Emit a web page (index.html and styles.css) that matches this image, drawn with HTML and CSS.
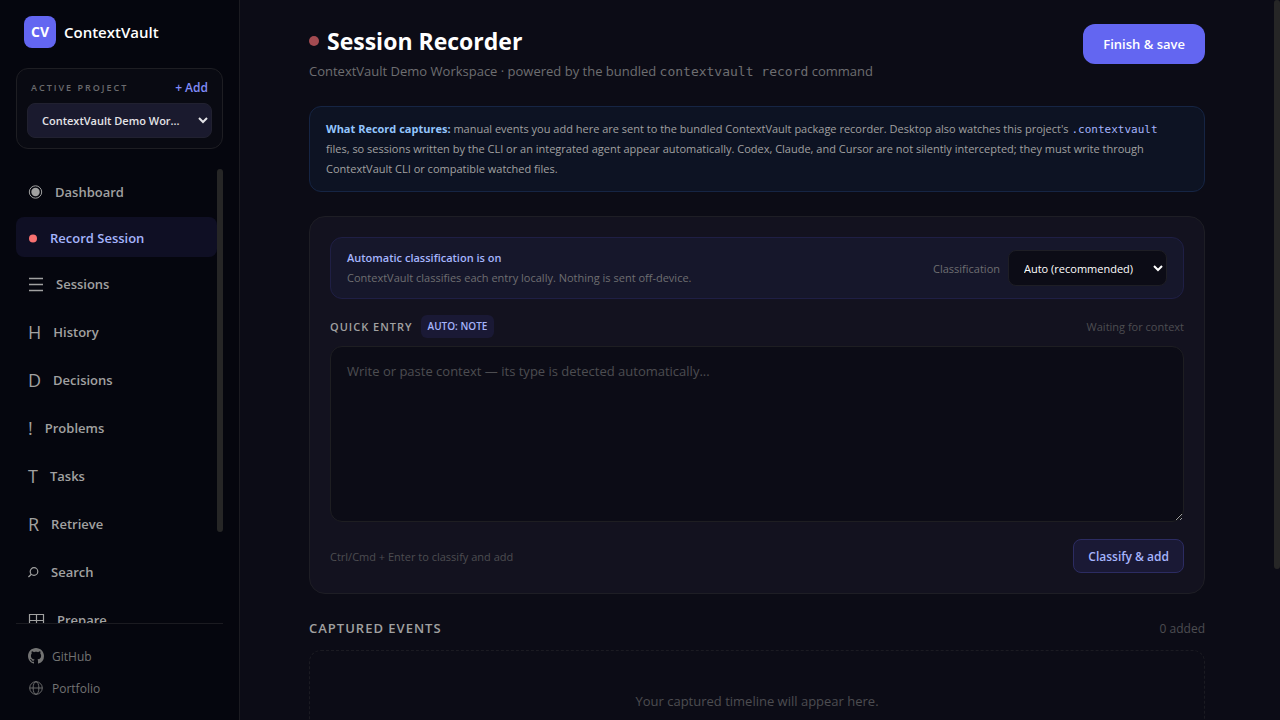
FILE: index.html
```
<!DOCTYPE html>
<html lang="en">
  <head>
    <meta charset="utf-8" />
    <meta name="viewport" content="width=device-width, initial-scale=1" />
    <title>ContextVault</title>
    <link rel="stylesheet" href="styles.css">
  </head>
  <body>
    <aside class="sidebar">
      <div class="brand">
        <span class="brand-mark">CV</span>
        <span class="brand-name">ContextVault</span>
      </div>

      <div class="project">
        <div class="project-head">
          <label class="project-label" for="project">Active project</label>
          <button class="link-button" type="button">+ Add</button>
        </div>
        <select class="project-select" id="project">
          <option>ContextVault Demo Wor...</option>
        </select>
      </div>

      <div class="nav-wrap">
        <nav class="nav">
          <a class="nav-item" href="#dashboard">
            <svg width="15" height="16" viewBox="0 0 15 16"><circle cx="7.5" cy="8" r="6.2" fill="none" stroke="currentColor"/><circle cx="7.5" cy="8" r="4.2" fill="currentColor"/></svg>
            Dashboard
          </a>
          <a class="nav-item active" href="#record">
            <svg width="10" height="10" viewBox="0 0 10 10"><circle cx="5" cy="5.5" r="4" fill="#f87171"/></svg>
            Record Session
          </a>
          <a class="nav-item" href="#sessions">
            <svg width="16" height="16" viewBox="0 0 16 16"><path d="M1 2.5h14M1 8.5h14M1 14.5h14" stroke="currentColor" stroke-width="1.3"/></svg>
            Sessions
          </a>
          <a class="nav-item" href="#history"><span class="nav-letter">H</span>History</a>
          <a class="nav-item" href="#decisions"><span class="nav-letter">D</span>Decisions</a>
          <a class="nav-item" href="#problems"><span class="nav-letter">!</span>Problems</a>
          <a class="nav-item" href="#tasks"><span class="nav-letter">T</span>Tasks</a>
          <a class="nav-item" href="#retrieve"><span class="nav-letter">R</span>Retrieve</a>
          <a class="nav-item" href="#search">
            <svg width="11" height="12" viewBox="0 0 11 12"><circle cx="6" cy="5.5" r="3.8" fill="none" stroke="currentColor" stroke-width="1.2"/><path d="M3.4 8.2L.4 11" stroke="currentColor" stroke-width="1.3"/></svg>
            Search
          </a>
          <a class="nav-item" href="#prepare">
            <svg width="17" height="16" viewBox="0 0 17 16"><path d="M1.5 2.5h14v12h-14zM1.5 8.5h14M8.5 2.5v12" fill="none" stroke="currentColor" stroke-width="1.2"/></svg>
            Prepare
          </a>
        </nav>
        <span class="scroll-thumb nav-thumb"></span>
      </div>

      <div class="sidebar-footer">
        <a class="footer-link" href="#github">
          <svg width="16" height="16" viewBox="0 0 16 16" fill="currentColor"><path d="M8 0C3.58 0 0 3.58 0 8c0 3.54 2.29 6.53 5.47 7.59.4.07.55-.17.55-.38 0-.19-.01-.82-.01-1.49-2.01.37-2.53-.49-2.69-.94-.09-.23-.48-.94-.82-1.13-.28-.15-.68-.52-.01-.53.63-.01 1.08.58 1.23.82.72 1.21 1.87.87 2.33.66.07-.52.28-.87.51-1.07-1.78-.2-3.64-.89-3.64-3.95 0-.87.31-1.59.82-2.15-.08-.2-.36-1.02.08-2.12 0 0 .67-.21 2.2.82.64-.18 1.32-.27 2-.27s1.36.09 2 .27c1.53-1.04 2.2-.82 2.2-.82.44 1.1.16 1.92.08 2.12.51.56.82 1.27.82 2.15 0 3.07-1.87 3.75-3.65 3.95.29.25.54.73.54 1.48 0 1.07-.01 1.93-.01 2.2 0 .21.15.46.55.38A8.01 8.01 0 0 0 16 8c0-4.42-3.58-8-8-8z"/></svg>
          GitHub
        </a>
        <a class="footer-link" href="#portfolio">
          <svg width="16" height="16" viewBox="0 0 16 16" fill="none" stroke="currentColor" stroke-width=".9"><circle cx="8" cy="8" r="6.3"/><ellipse cx="8" cy="8" rx="2.9" ry="6.3"/><path d="M1.7 8h12.6"/></svg>
          Portfolio
        </a>
      </div>
    </aside>

    <main class="main">
      <div class="content">
        <header class="page-head">
          <div>
            <h1 class="page-title"><span class="rec-dot"></span>Session Recorder</h1>
            <p class="page-sub">ContextVault Demo Workspace · powered by the bundled <code>contextvault record</code> command</p>
          </div>
          <button class="btn-primary" type="button">Finish &amp; save</button>
        </header>

        <p class="info">
          <strong>What Record captures:</strong> manual events you add here are sent to the bundled ContextVault package recorder. Desktop also watches this project's <code>.contextvault</code> files, so sessions written by the CLI or an integrated agent appear automatically. Codex, Claude, and Cursor are not silently intercepted; they must write through ContextVault CLI or compatible watched files.
        </p>

        <section class="card">
          <div class="auto">
            <div>
              <div class="auto-title">Automatic classification is on</div>
              <div class="auto-text">ContextVault classifies each entry locally. Nothing is sent off-device.</div>
            </div>
            <div class="auto-control">
              <label for="kind">Classification</label>
              <select class="kind-select" id="kind">
                <option>Auto (recommended)</option>
              </select>
            </div>
          </div>

          <div class="entry-head">
            <label class="entry-label" for="entry">Quick entry</label>
            <span class="chip">Auto: note</span>
            <span class="entry-status">Waiting for context</span>
          </div>
          <textarea class="entry" id="entry" placeholder="Write or paste context — its type is detected automatically..."></textarea>
          <div class="entry-foot">
            <span>Ctrl/Cmd + Enter to classify and add</span>
            <button class="btn-secondary" type="button">Classify &amp; add</button>
          </div>
        </section>

        <div class="events-head">
          <h2 class="events-title">Captured events</h2>
          <span class="events-count">0 added</span>
        </div>
        <div class="empty">Your captured timeline will appear here.</div>
      </div>
    </main>
    <span class="scroll-thumb page-thumb"></span>
  </body>
</html>
```
FILE: styles.css
```
* {
  box-sizing: border-box;
}

body {
  margin: 0;
  display: flex;
  height: 100vh;
  overflow: hidden;
  position: relative;
  background: #0c0c16;
  color: #fff;
  font-family: "Segoe UI", "Open Sans", "Noto Sans", sans-serif;
  font-size: 13px;
}

button,
select,
textarea {
  font-family: inherit;
}

a {
  color: inherit;
  text-decoration: none;
}

code {
  font-family: "DejaVu Sans Mono", monospace;
  line-height: 1;
}

svg {
  flex: none;
}

/* sidebar */

.sidebar {
  flex: none;
  width: 240px;
  display: flex;
  flex-direction: column;
  padding: 16px;
  background: #05060e;
  border-right: 1px solid #1b1b21;
}

.brand {
  display: flex;
  align-items: center;
  gap: 8px;
  padding: 0 8px;
  margin-bottom: 20px;
}

.brand-mark {
  width: 32px;
  height: 32px;
  border-radius: 8px;
  background: #6366f1;
  font-size: 14px;
  font-weight: 700;
  line-height: 32px;
  text-align: center;
}

.brand-name {
  font-size: 15px;
  font-weight: 600;
}

.project {
  padding: 10px;
  margin-bottom: 20px;
  border: 1px solid #1e1e23;
  border-radius: 12px;
  background: #090a12;
}

.project-head {
  display: flex;
  justify-content: space-between;
  align-items: center;
  height: 16px;
  padding: 0 4px;
  margin-bottom: 8px;
}

.project-label {
  color: #6b6b6e;
  font-size: 9px;
  font-weight: 600;
  letter-spacing: 2px;
  text-transform: uppercase;
}

.link-button {
  padding: 0;
  border: 0;
  background: none;
  color: #818cf8;
  font-size: 12px;
  font-weight: 600;
}

.project-select {
  display: block;
  width: 100%;
  height: 35px;
  padding: 0 10px;
  border: 1px solid #212130;
  border-radius: 8px;
  background: #1a1a2e;
  color: #e4e4e7;
  font-size: 11px;
  font-weight: 600;
}

.nav-wrap {
  flex: 1;
  min-height: 0;
  position: relative;
}

.nav {
  display: flex;
  flex-direction: column;
  gap: 4px;
  height: 100%;
  padding-right: 6px;
  overflow-y: auto;
  scrollbar-width: none;
}

.nav-item {
  flex: none;
  display: flex;
  align-items: center;
  gap: 12px;
  height: 44px;
  padding: 1px 12px 0;
  border-radius: 8px;
  color: #a1a1a1;
  font-size: 13px;
  font-weight: 600;
}

.nav-item.active {
  height: 40px;
  background: #0f0f24;
  color: #a5b4fc;
}

.nav-letter {
  font-size: 18px;
  font-weight: 500;
  line-height: 22px;
}

.scroll-thumb {
  position: absolute;
  top: 0;
  right: 0;
  width: 6px;
  border-radius: 3px;
  background: #262626;
}

.nav-thumb {
  height: 80%;
}

.page-thumb {
  height: 79%;
}

.sidebar-footer {
  padding-top: 16px;
  border-top: 1px solid #1b1b21;
}

.footer-link {
  display: flex;
  align-items: center;
  gap: 8px;
  height: 32px;
  padding: 0 12px;
  color: #737373;
  font-size: 12px;
}

/* page */

.main {
  flex: 1;
  min-width: 0;
  margin-right: 6px;
  overflow-y: auto;
  scrollbar-width: none;
}

.content {
  max-width: 960px;
  margin: 0 auto;
  padding: 24px 32px;
}

.page-head {
  display: flex;
  justify-content: space-between;
  align-items: flex-start;
  margin-bottom: 24px;
}

.page-title {
  display: flex;
  align-items: center;
  gap: 8px;
  margin: 0 0 2px;
  font-size: 23px;
  font-weight: 700;
  line-height: 34px;
}

.rec-dot {
  width: 10px;
  height: 10px;
  border-radius: 50%;
  background: #a34b51;
}

.page-sub {
  margin: 0;
  color: #6e6e71;
  font-size: 13px;
  line-height: 22px;
}

.btn-primary {
  height: 40px;
  padding: 0 20px;
  border: 0;
  border-radius: 12px;
  background: #6366f1;
  color: #fff;
  font-size: 13px;
  font-weight: 600;
}

.info {
  margin: 0 0 24px;
  padding: 12px 40px 12px 16px;
  border: 1px solid #162544;
  border-radius: 12px;
  background: #0d1323;
  color: #a1a1a1;
  font-size: 11px;
  line-height: 20px;
}

.info strong {
  color: #93c5fd;
}

.info code {
  color: #a5b4fc;
  font-size: 11px;
}

.card {
  padding: 20px;
  margin-bottom: 24px;
  border: 1px solid #1e1e25;
  border-radius: 16px;
  background: #13121f;
}

.auto {
  display: flex;
  justify-content: space-between;
  align-items: center;
  padding: 12px 16px;
  margin-bottom: 16px;
  border: 1px solid #1f1f45;
  border-radius: 12px;
  background: #16172b;
}

.auto-title {
  color: #a5b4fc;
  font-size: 11px;
  font-weight: 600;
  line-height: 16px;
}

.auto-text {
  margin-top: 4px;
  color: #6e6e71;
  font-size: 11px;
  line-height: 16px;
}

.auto-control {
  display: flex;
  align-items: center;
  gap: 8px;
  color: #6e6e71;
  font-size: 11px;
}

.kind-select {
  width: 159px;
  height: 36px;
  padding: 0 11px;
  border: 1px solid #1e1e25;
  border-radius: 8px;
  background: #0c0c16;
  color: #fff;
  font-size: 11px;
  font-weight: 500;
}

.entry-head {
  display: flex;
  align-items: center;
  gap: 8px;
  margin-bottom: 8px;
}

.entry-label {
  color: #a1a1a1;
  font-size: 11px;
  font-weight: 600;
  letter-spacing: 1px;
  text-transform: uppercase;
}

.chip {
  padding: 0 7px;
  border-radius: 6px;
  background: #1a1935;
  color: #a5b4fc;
  font-size: 10px;
  font-weight: 600;
  line-height: 23px;
  text-transform: uppercase;
}

.entry-status {
  margin-left: auto;
  color: #4d4d51;
  font-size: 11px;
}

.entry {
  display: block;
  width: 100%;
  height: 176px;
  padding: 13px 16px;
  margin-bottom: 17px;
  border: 1px solid #1e1e22;
  border-radius: 12px;
  background: #0c0c16;
  color: #fff;
  font-size: 13px;
  line-height: 22px;
  resize: vertical;
}

.entry::placeholder {
  color: #4d4d51;
}

.entry-foot {
  display: flex;
  justify-content: space-between;
  align-items: center;
  color: #4d4d51;
  font-size: 11px;
}

.btn-secondary {
  height: 34px;
  padding: 0 14px;
  border: 1px solid #2c2c62;
  border-radius: 8px;
  background: #1a1935;
  color: #a5b4fc;
  font-size: 12px;
  font-weight: 600;
}

.events-head {
  display: flex;
  justify-content: space-between;
  align-items: center;
  height: 20px;
  margin-bottom: 12px;
}

.events-title {
  margin: 0;
  color: #a1a1a1;
  font-size: 13px;
  font-weight: 600;
  letter-spacing: 1px;
  text-transform: uppercase;
}

.events-count {
  color: #4d4d51;
  font-size: 12px;
}

.empty {
  padding: 40px 16px;
  border: 1px dashed #1b1b22;
  border-radius: 12px;
  color: #4d4d51;
  font-size: 13px;
  line-height: 20px;
  text-align: center;
}
```
